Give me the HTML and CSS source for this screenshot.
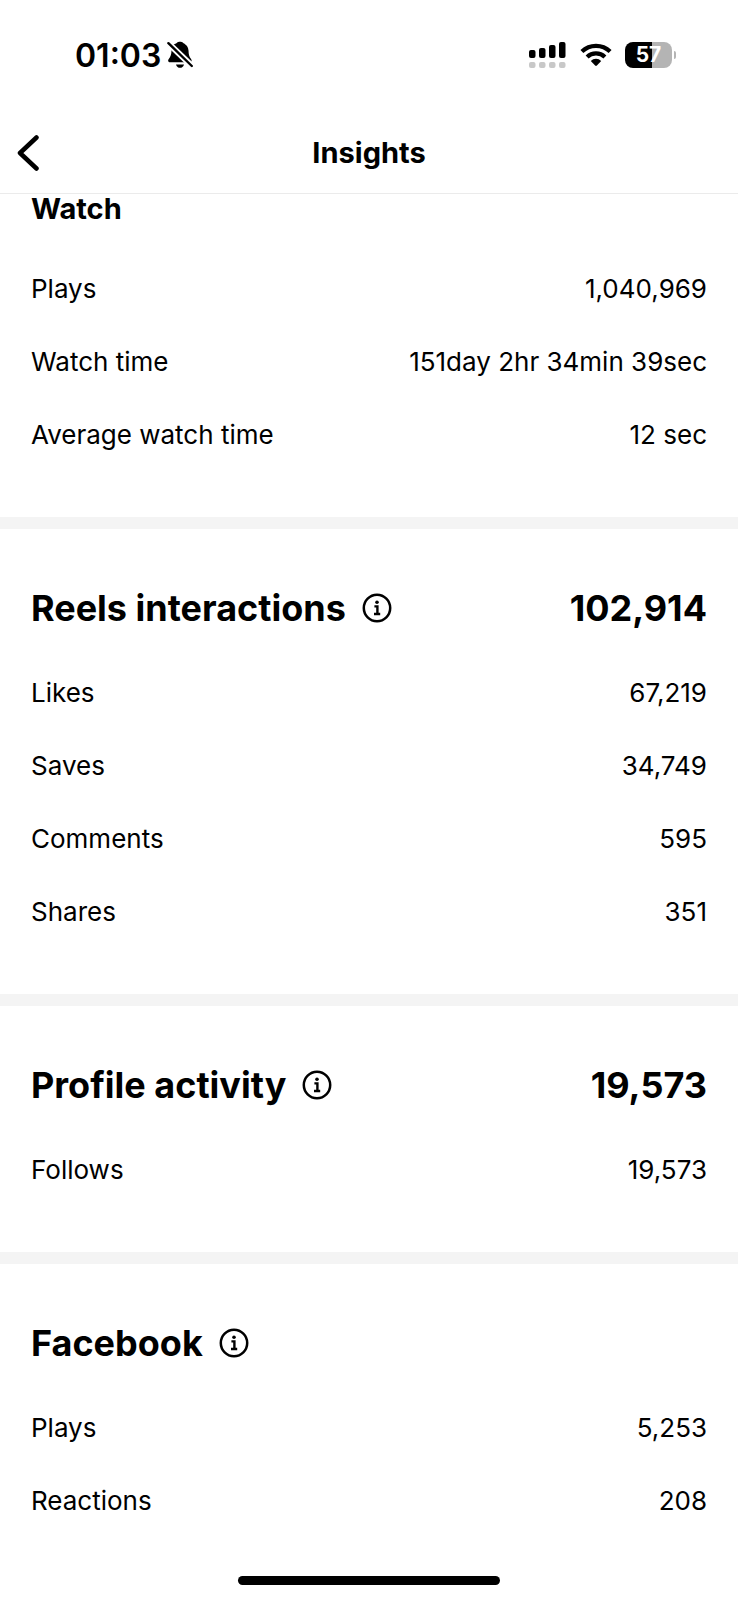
FILE: index.html
```html
<!DOCTYPE html>
<html lang="en">
<head>
<meta charset="utf-8">
<meta name="viewport" content="width=device-width, initial-scale=1">
<title>Insights</title>
<link rel="stylesheet" href="styles.css">
</head>
<body>
<svg class="sprite" aria-hidden="true">
  <symbol id="info" viewBox="0 0 30 30">
    <circle cx="15" cy="15" r="13.2" fill="none" stroke="currentColor" stroke-width="2.5"/>
    <circle cx="15" cy="9.2" r="1.8" fill="currentColor"/>
    <path d="M12.4 13.4h3v7.4M12 21h6.2" fill="none" stroke="currentColor" stroke-width="2.4"/>
  </symbol>
</svg>
<div class="screen">
  <div class="status">
    <div class="status-left">
      <span class="time">01:03</span>
      <svg class="bell" width="26" height="28" viewBox="0 0 26 28" aria-hidden="true">
        <path d="M5.2 5.2C6.600 3 9 2.800 10 1.800C11.200.4 14.800.4 16 1.800C17 2.800 21 4 21.500 9.500C21.700 13.500 22 15.500 24.200 18.200C24.800 19.100 24.800 20.500 24 21.200H2.400C1 20.800.8 19.200 1.600 18.200C3.800 15.600 4.300 13.500 4.500 9.500C4.600 7.800 4.700 6.200 5.200 5.200Z"/>
        <path d="M9 23.400h8c-.6 2.300-2.200 3.400-4 3.400s-3.400-1.100-4-3.400Z"/>
        <path d="M-1 0L26 26" stroke="#fff" stroke-width="6"/>
        <path d="M1.400 2.200L24.800 25" stroke="#000" stroke-width="2.400" stroke-linecap="round"/>
      </svg>
    </div>
    <div class="status-right">
      <svg width="38" height="28" viewBox="0 0 38 28" aria-hidden="true">
        <rect x="0" y="9" width="6.500" height="8" rx="2"/>
        <rect x="10" y="7" width="6.500" height="10" rx="2"/>
        <rect x="20" y="4" width="6.500" height="13" rx="2"/>
        <rect x="30" y="1" width="6.500" height="16" rx="2"/>
        <g fill="#c8c8c8">
          <rect x="0" y="21" width="6.500" height="6" rx="2"/>
          <rect x="10" y="21" width="6.500" height="6" rx="2"/>
          <rect x="20" y="21" width="6.500" height="6" rx="2"/>
          <rect x="30" y="21" width="6.500" height="6" rx="2"/>
        </g>
      </svg>
      <svg class="wifi" width="32" height="24" viewBox="0 0 32 24" aria-hidden="true">
        <path d="M1.900 8.600A20.200 20.200 0 0 1 30.100 8.600M7.100 13.900A12.800 12.800 0 0 1 24.900 13.900" fill="none" stroke="#000" stroke-width="4.200"/>
        <path d="M10.800 18A7.400 7.400 0 0 1 21.200 18L16.900 22.500Q16 23.400 15.100 22.500Z"/>
      </svg>
      <div class="battery">
        <span class="battery-body">57</span>
        <span class="battery-tip"></span>
      </div>
    </div>
  </div>

  <header class="nav">
    <button class="back" type="button" aria-label="Back">
      <svg width="24" height="36" viewBox="0 0 24 36" aria-hidden="true">
        <path d="M19.500 2.500L3 18L19.500 33.500" fill="none" stroke="#000" stroke-width="4.500" stroke-linecap="round" stroke-linejoin="round"/>
      </svg>
    </button>
    <h1>Insights</h1>
  </header>

  <main>
    <section class="first">
      <h3>Watch</h3>
      <dl>
        <div><dt>Plays</dt><dd>1,040,969</dd></div>
        <div><dt>Watch time</dt><dd>151day 2hr 34min 39sec</dd></div>
        <div><dt>Average watch time</dt><dd>12 sec</dd></div>
      </dl>
    </section>

    <section>
      <div class="title">
        <h2>Reels interactions</h2>
        <button class="info" type="button" aria-label="About reels interactions"><svg width="30" height="30"><use href="#info"/></svg></button>
        <strong>102,914</strong>
      </div>
      <dl>
        <div><dt>Likes</dt><dd>67,219</dd></div>
        <div><dt>Saves</dt><dd>34,749</dd></div>
        <div><dt>Comments</dt><dd>595</dd></div>
        <div><dt>Shares</dt><dd>351</dd></div>
      </dl>
    </section>

    <section>
      <div class="title">
        <h2>Profile activity</h2>
        <button class="info" type="button" aria-label="About profile activity"><svg width="30" height="30"><use href="#info"/></svg></button>
        <strong>19,573</strong>
      </div>
      <dl>
        <div><dt>Follows</dt><dd>19,573</dd></div>
      </dl>
    </section>

    <section class="last">
      <div class="title">
        <h2>Facebook</h2>
        <button class="info" type="button" aria-label="About Facebook"><svg width="30" height="30"><use href="#info"/></svg></button>
      </div>
      <dl>
        <div><dt>Plays</dt><dd>5,253</dd></div>
        <div><dt>Reactions</dt><dd>208</dd></div>
      </dl>
    </section>
  </main>

  <div class="home-bar"></div>
</div>
</body>
</html>
```
FILE: styles.css
```css
* {
  box-sizing: border-box;
}

body,
h1,
h2,
h3,
dl,
dd {
  margin: 0;
}

body {
  background: #fff;
  color: #000;
  font-family: Inter, "Liberation Sans", sans-serif;
  font-size: 26px;
}

button {
  display: flex;
  padding: 0;
  border: 0;
  background: none;
  color: inherit;
}

.sprite {
  display: none;
}

.screen {
  display: flex;
  flex-direction: column;
  min-height: 100vh;
}

.status {
  display: flex;
  align-items: center;
  justify-content: space-between;
  height: 112px;
  padding: 0 62px 2px 75px;
}

.status-left {
  display: flex;
  align-items: center;
  gap: 6px;
}

.time {
  font-size: 32px;
  font-weight: 600;
}

.status-right {
  display: flex;
  align-items: center;
  gap: 13px;
}

.battery {
  display: flex;
  align-items: center;
  gap: 2px;
}

.battery-body {
  width: 47px;
  border-radius: 8px;
  background: linear-gradient(90deg, #000 57%, #b4b4b4 57%);
  color: #fff;
  font-size: 21px;
  font-weight: 700;
  line-height: 26px;
  text-align: center;
}

.battery-tip {
  width: 2px;
  height: 8px;
  border-radius: 0 2px 2px 0;
  background: #b4b4b4;
}

.nav {
  display: grid;
  grid-template-columns: 1fr auto 1fr;
  align-items: center;
  height: 82px;
  padding: 0 17px;
  border-bottom: 1px solid #ebebeb;
}

.nav h1 {
  font-size: 29px;
  font-weight: 700;
}

section {
  padding: 55px 31px 46px;
  border-bottom: 12px solid #f4f4f4;
}

.first {
  padding-top: 0;
}

.last {
  padding-bottom: 0;
  border-bottom: 0;
}

h3 {
  margin-bottom: 28px;
  font-size: 29px;
  font-weight: 700;
  line-height: 30px;
}

.title {
  display: flex;
  align-items: center;
  margin-bottom: 24px;
  font-size: 36px;
  line-height: 48px;
}

.title h2,
.title strong {
  font-size: inherit;
  font-weight: 700;
}

.info {
  margin-left: 16px;
}

.title strong {
  margin-left: auto;
}

dl div {
  display: flex;
  align-items: center;
  justify-content: space-between;
  height: 73px;
}

.home-bar {
  width: 36%;
  max-width: 262px;
  height: 9px;
  margin: auto auto 15px;
  border-radius: 5px;
  background: #000;
}
```
